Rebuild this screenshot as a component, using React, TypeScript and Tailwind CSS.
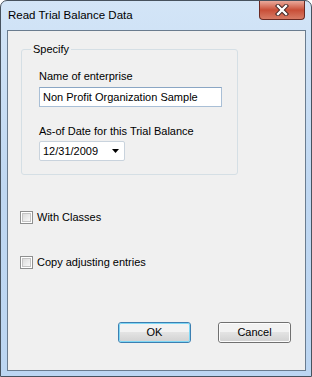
import React from 'react';

function Checkbox({ label }: { label: string }) {
  return (
    <label className="flex items-center h-[13px] ml-[12px]">
      <span className="w-[13px] h-[13px] border border-[#8e8f8f] bg-white p-[1px] shrink-0">
        <span className="block w-full h-full border border-[#c4c4c4] bg-gradient-to-br from-[#dcdcdc] to-[#f8f8f8]" />
      </span>
      <span className="ml-[4px] leading-[13px]">{label}</span>
    </label>
  );
}

function Button({ children, isDefault }: { children: React.ReactNode; isDefault?: boolean }) {
  return (
    <button
      className={
        'w-[73px] h-[21px] rounded-[3px] border p-0 ' +
        (isDefault ? 'border-[#3c7fb1]' : 'border-[#707070]')
      }
    >
      <span
        className={
          'flex items-center justify-center w-full h-full rounded-[2px] border bg-gradient-to-b from-[#f2f2f2] from-45% via-[#e3e3e3] via-50% to-[#d3d3d3] ' +
          (isDefault ? 'border-[#7fd7f5]' : 'border-[#fcfcfc]')
        }
      >
        {children}
      </span>
    </button>
  );
}

export default function App() {
  return (
    <div
      className="w-[312px] h-[377px] flex flex-col border border-[#47525e] rounded-t-[7px] bg-gradient-to-b from-[#d3e5f7] via-[#bfd7f1] to-[#bcd6f2] text-[11px] text-black overflow-hidden"
      style={{ fontFamily: '"Liberation Sans", Arial, sans-serif' }}
    >
      {/* title bar */}
      <div className="h-[29px] flex items-center shrink-0">
        <span className="pl-[7px] text-[11.5px] text-black">Read Trial Balance Data</span>
        <div className="ml-auto mr-[6px] self-start w-[46px] h-[19px] rounded-b-[4px] border border-t-0 border-[#6b2a22] bg-gradient-to-b from-[#e9a99b] via-[#c84e37] to-[#d77b65] flex items-center justify-center">
          <svg width="14" height="12" viewBox="0 0 14 12">
            <path d="M3 2 L11 10 M11 2 L3 10" stroke="#3a2020" strokeWidth="4.2" strokeLinecap="square" />
            <path d="M3 2 L11 10 M11 2 L3 10" stroke="#ffffff" strokeWidth="2.4" strokeLinecap="square" />
          </svg>
        </div>
      </div>

      {/* client area */}
      <div className="flex-1 ml-[6px] mr-[5px] mb-[5px] border border-[#6a7c8f] bg-[#f0f0f0] flex flex-col">
        <div className="relative mt-[18px] ml-[13px] w-[217px] h-[126px] border border-[#d5dfe5] rounded-[3px] pl-[17px] pt-[20px]">
          <span className="absolute left-[9px] top-[-7px] px-[2px] bg-[#f0f0f0] leading-[13px]">Specify</span>
          <div className="leading-[13px]">Name of enterprise</div>
          <div className="mt-[4px] w-[183px] h-[20px] border border-[#a9bfd6] border-t-[#8aa6c4] bg-white flex items-center pl-[3px]">
            Non Profit Organization Sample
          </div>
          <div className="mt-[18px] leading-[13px]">As-of Date for this Trial Balance</div>
          <div className="mt-[3px] w-[86px] h-[20px] border border-[#c9d3dd] rounded-[2px] bg-white flex items-center pl-[3px]">
            <span>12/31/2009</span>
            <svg className="ml-auto mr-[4px]" width="8" height="5" viewBox="0 0 8 5">
              <path d="M0 0 H7 L3.5 4 Z" fill="#000" />
            </svg>
          </div>
        </div>

        <div className="mt-[36px]">
          <Checkbox label="With Classes" />
        </div>
        <div className="mt-[32px]">
          <Checkbox label="Copy adjusting entries" />
        </div>

        <div className="mt-[53px] ml-[110px] flex gap-[27px]">
          <Button isDefault>OK</Button>
          <Button>Cancel</Button>
        </div>
      </div>
    </div>
  );
}
